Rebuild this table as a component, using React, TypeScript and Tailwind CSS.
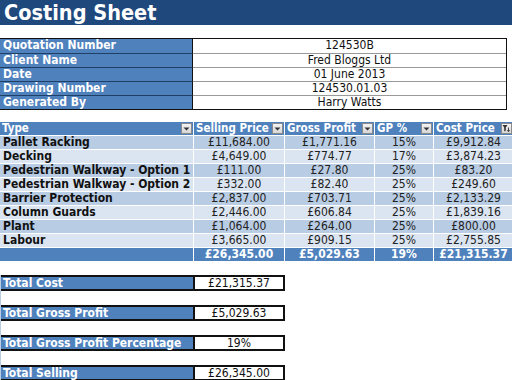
import { ReactNode } from "react";

const info = [
  ["Quotation Number", "124530B"],
  ["Client Name", "Fred Bloggs Ltd"],
  ["Date", "01 June 2013"],
  ["Drawing Number", "124530.01.03"],
  ["Generated By", "Harry Watts"],
];

const rows = [
  ["Pallet Racking", "£11,684.00", "£1,771.16", "15%", "£9,912.84"],
  ["Decking", "£4,649.00", "£774.77", "17%", "£3,874.23"],
  ["Pedestrian Walkway - Option 1", "£111.00", "£27.80", "25%", "£83.20"],
  ["Pedestrian Walkway - Option 2", "£332.00", "£82.40", "25%", "£249.60"],
  ["Barrier Protection", "£2,837.00", "£703.71", "25%", "£2,133.29"],
  ["Column Guards", "£2,446.00", "£606.84", "25%", "£1,839.16"],
  ["Plant", "£1,064.00", "£264.00", "25%", "£800.00"],
  ["Labour", "£3,665.00", "£909.15", "25%", "£2,755.85"],
];

const totals = [
  ["Total Cost", "£21,315.37"],
  ["Total Gross Profit", "£5,029.63"],
  ["Total Gross Profit Percentage", "19%"],
  ["Total Selling", "£26,345.00"],
];

function DropButton({ filter }: { filter?: boolean }) {
  return (
    <span className="flex h-[11px] w-[11px] shrink-0 items-center justify-center border border-[#8a8a8a] bg-gradient-to-b from-[#f4f4f4] to-[#d6d6d6]">
      {filter ? (
        <svg width="9" height="9" viewBox="0 0 9 9">
          <path d="M0.5 1 H5.5 L3.8 3.5 V6.5 L2.2 7.5 V3.5 Z" fill="#333" />
          <path d="M6.5 3.5 V7.5 M5.2 6.2 L6.5 7.7 L7.8 6.2" stroke="#333" strokeWidth="0.9" fill="none" />
        </svg>
      ) : (
        <svg width="7" height="4" viewBox="0 0 7 4">
          <path d="M0.5 0.5 H6.5 L3.5 3.5 Z" fill="#333" />
        </svg>
      )}
    </span>
  );
}

function HeadCell({ children, filter }: { children: ReactNode; filter?: boolean }) {
  return (
    <div className="flex h-[13px] items-center justify-between whitespace-nowrap bg-[#4f81bd] pl-[2px] pr-[1px] text-[11.5px] font-bold leading-[13px] text-white">
      <span>{children}</span>
      <DropButton filter={filter} />
    </div>
  );
}

export default function App() {
  return (
    <div
      className="h-[380px] w-[512px] overflow-hidden bg-white text-[12px] leading-[14px] text-[#111]"
      style={{ fontFamily: '"DejaVu Sans Condensed", "DejaVu Sans", Verdana, sans-serif' }}
    >
      <div className="h-[25px] bg-[#1f497d] pl-[4px] text-[21.5px] font-bold leading-[25px] text-white">Costing Sheet</div>

      <div className="mt-[13px] w-[507px] border-y border-r border-[#111]">
        {info.map(([label, value], i) => (
          <div key={label} className={`grid h-[14px] grid-cols-[193px_1fr] ${i > 0 ? "border-t border-[#999]" : ""}`}>
            <div className={`border-r border-[#111] bg-[#4f81bd] pl-[3px] font-bold text-white ${i > 0 ? "-mt-px h-[14px] border-t border-t-[#1f3f66] leading-[12px]" : "leading-[13px]"}`}>{label}</div>
            <div className="whitespace-nowrap text-center leading-[13px]">{value}</div>
          </div>
        ))}
      </div>

      <div className="mt-[12px] grid grid-cols-[193px_90px_89px_58px_79px] gap-px bg-white">
        <HeadCell>Type</HeadCell>
        <HeadCell>Selling Price</HeadCell>
        <HeadCell>Gross Profit</HeadCell>
        <HeadCell>GP %</HeadCell>
        <HeadCell filter>Cost Price</HeadCell>
        {rows.map((r, i) =>
          r.map((c, j) => (
            <div
              key={`${i}-${j}`}
              className={`h-[13px] whitespace-nowrap leading-[13px] ${i % 2 === 0 ? "bg-[#b8cce4]" : "bg-[#dbe5f1]"} ${j === 0 ? "pl-[3px] font-bold" : "text-center text-[#222]"}`}
            >
              {c}
            </div>
          ))
        )}
        <div className="h-[13px] bg-[#4f81bd]" />
        {["£26,345.00", "£5,029.63", "19%", "£21,315.37"].map((t) => (
          <div key={t} className="h-[13px] whitespace-nowrap bg-[#4f81bd] text-center font-bold leading-[13px] text-white">{t}</div>
        ))}
      </div>

      <div className="mt-[14px] flex flex-col gap-[14px] border-l border-[#b8cce4]">
        {totals.map(([label, value]) => (
          <div key={label} className="grid h-[16px] w-[284px] grid-cols-[192px_92px] border-y-2 border-[#111]">
            <div className="whitespace-nowrap bg-[#4f81bd] pl-[2px] font-bold leading-[12px] text-white">{label}</div>
            <div className="border-x-2 border-[#111] text-center leading-[12px]">{value}</div>
          </div>
        ))}
      </div>
    </div>
  );
}
